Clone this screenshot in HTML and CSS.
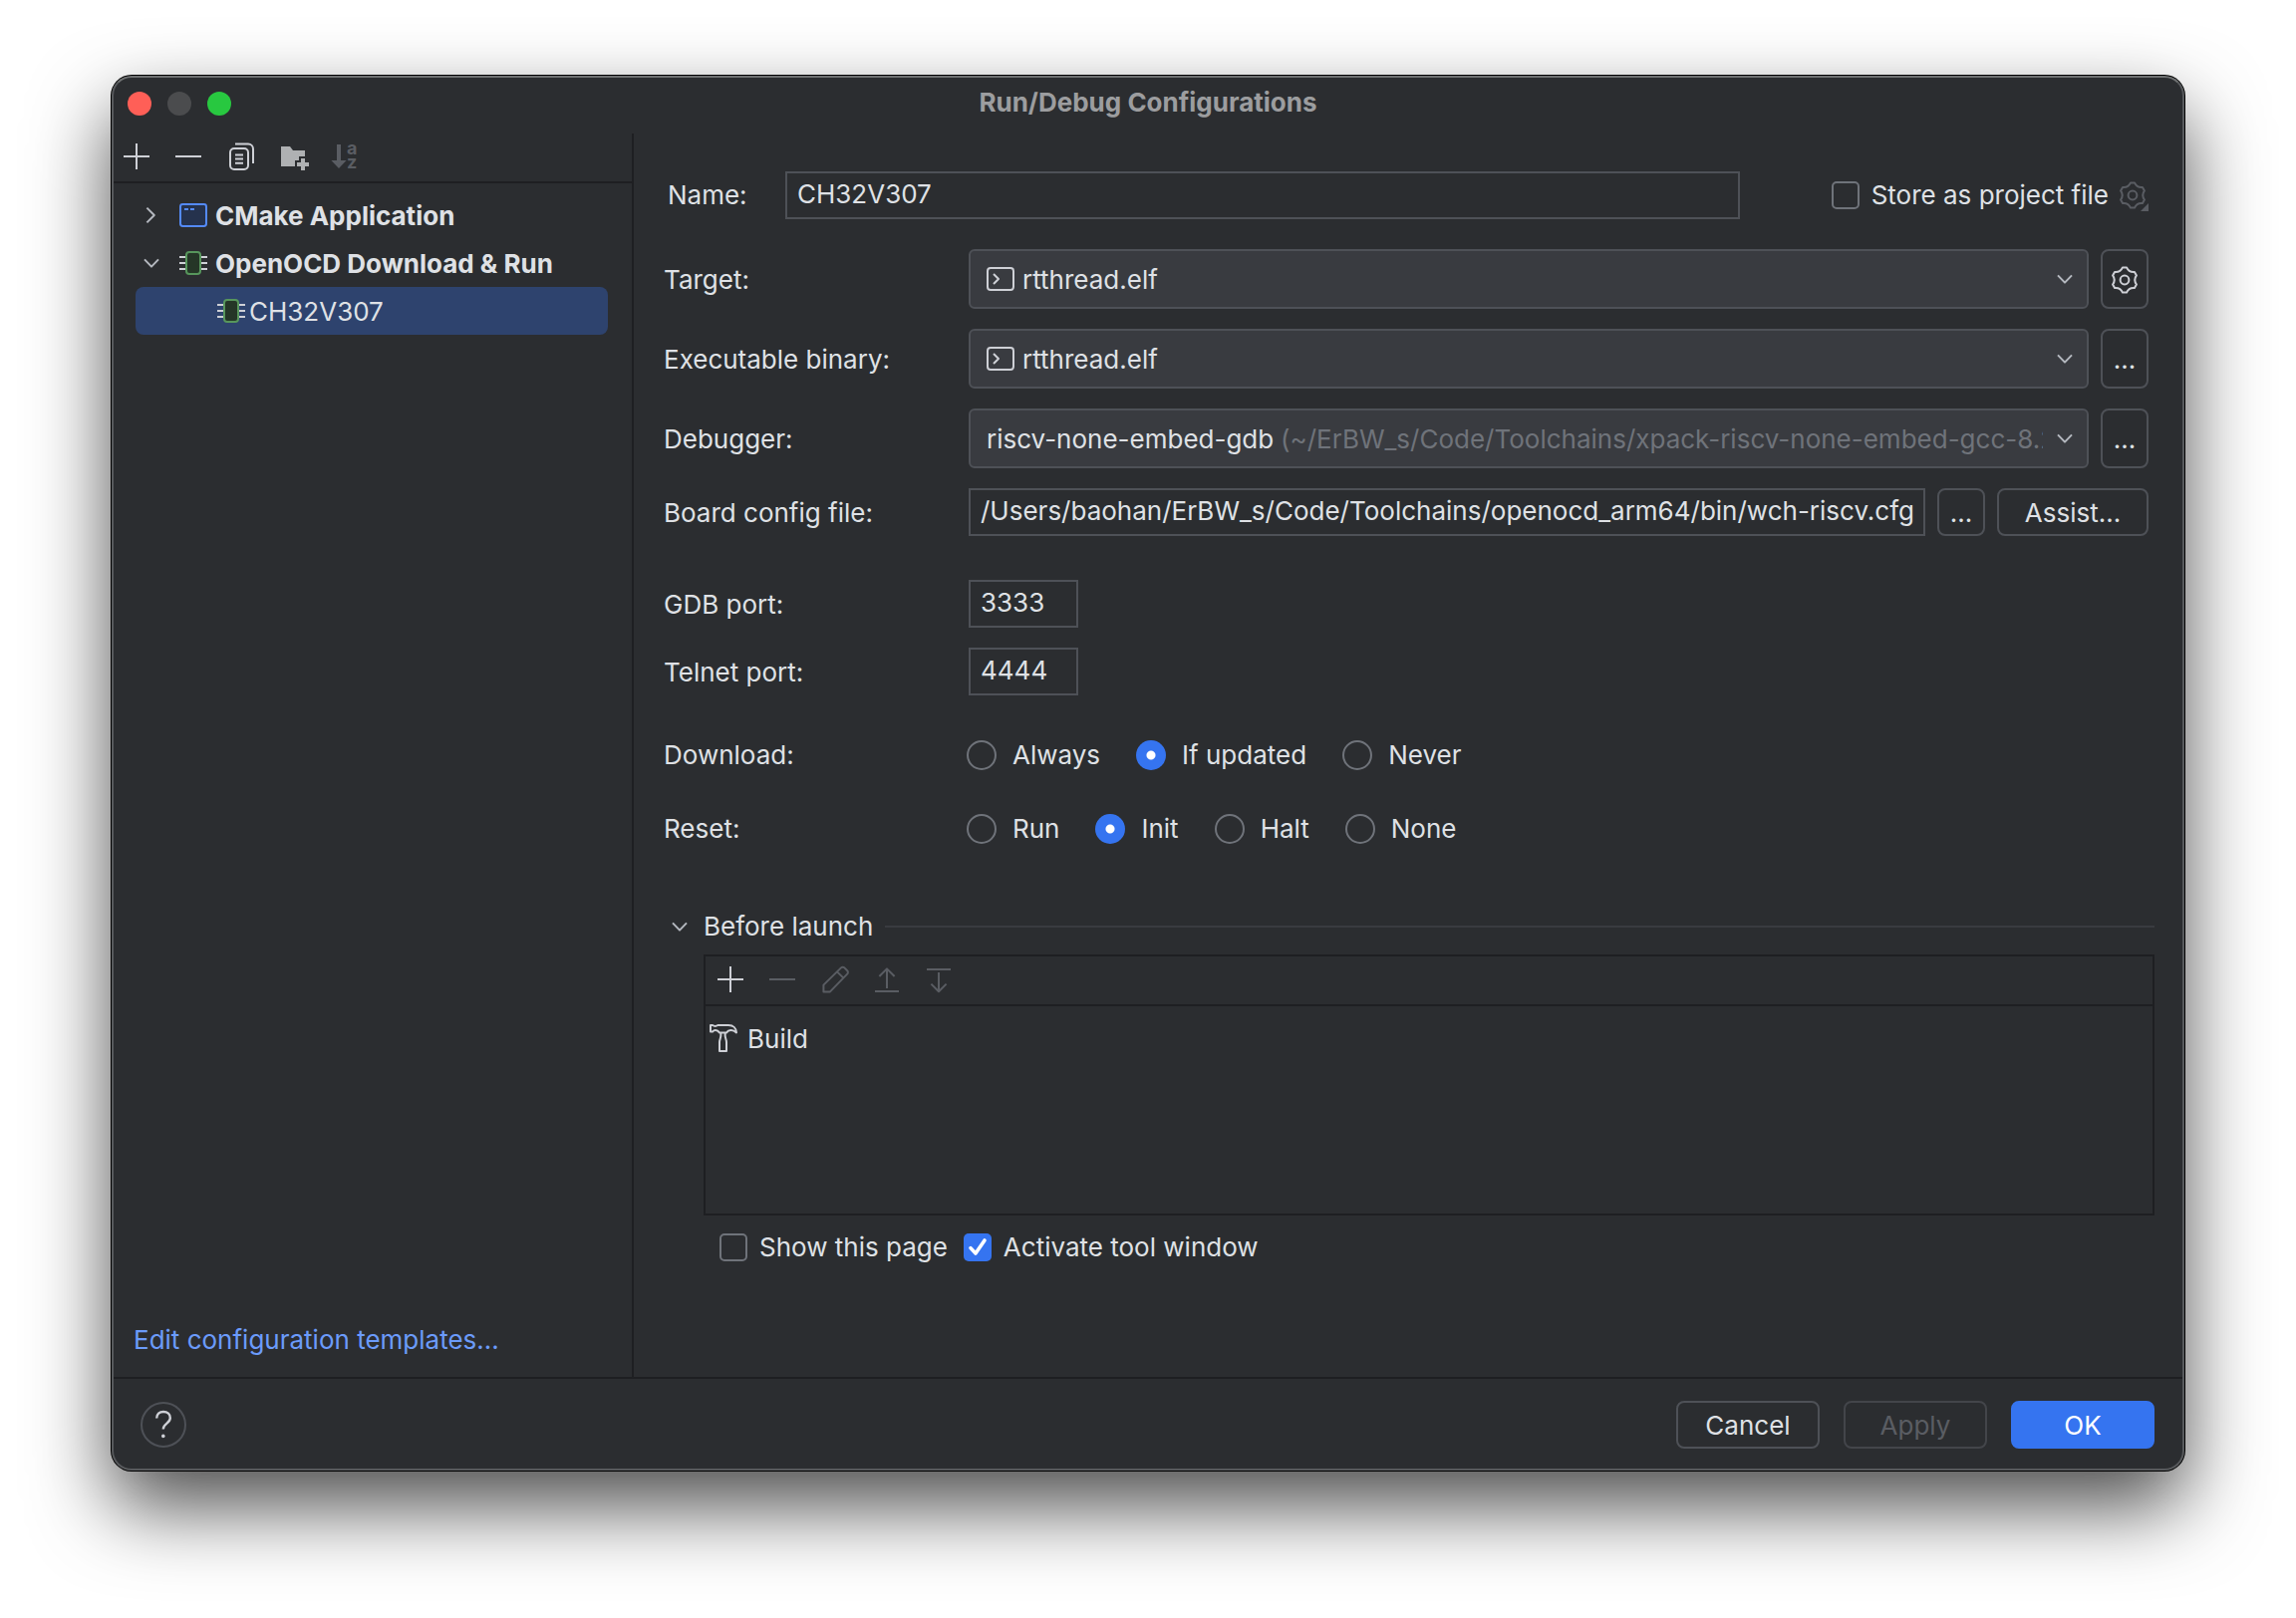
FILE: index.html
```html
<!DOCTYPE html>
<html lang="en">
<head>
<meta charset="utf-8">
<title>Run/Debug Configurations</title>
<meta name="viewport" content="width=device-width, initial-scale=1">
<link rel="stylesheet" href="styles.css">
</head>
<body>
<svg class="sprite" aria-hidden="true">
  <symbol id="i-plus" viewBox="0 0 16 16"><path d="M8 1.5v13M1.5 8h13"/></symbol>
  <symbol id="i-minus" viewBox="0 0 16 16"><path d="M1.5 8h13"/></symbol>
  <symbol id="i-down" viewBox="0 0 16 16"><path d="M4.5 6.2 8 9.8l3.5-3.6"/></symbol>
  <symbol id="i-right" viewBox="0 0 16 16"><path d="M5.700 4.300 9.400 8l-3.700 3.700"/></symbol>
  <symbol id="i-chip" viewBox="0 0 16 16"><path d="M1 5h3M1 8h3M1 11h3M12 5h3M12 8h3M12 11h3"/><rect class="chip" x="4.500" y="2.500" width="7" height="11" rx="1.500"/></symbol>
  <symbol id="i-console" viewBox="0 0 16 16"><rect x="1.500" y="2.500" width="13" height="11" rx="1.500"/><path d="M4.500 5.500 7 8l-2.500 2.500"/></symbol>
  <symbol id="i-gear" viewBox="0 0 16 16"><path d="M7 1.700H9Q10.150 4.280 12.970 3.970L13.970 5.710Q12.300 8 13.970 10.290L12.970 12.030Q10.150 11.720 9 14.300H7Q5.850 11.720 3.030 12.030L2.030 10.290Q3.700 8 2.030 5.710L3.030 3.970Q5.850 4.280 7 1.700Z"/><circle cx="8" cy="8" r="2.200"/></symbol>
</svg>

<div class="window" role="dialog" aria-labelledby="title">
  <header class="titlebar">
    <div class="lights">
      <button class="light close" aria-label="Close"></button>
      <button class="light minimize" aria-label="Minimize" disabled></button>
      <button class="light maximize" aria-label="Zoom"></button>
    </div>
    <h1 id="title">Run/Debug Configurations</h1>
  </header>

  <div class="body">
    <aside class="sidebar">
      <div class="toolbar sidebar-tools">
        <button class="tool" aria-label="Add"><svg class="icon"><use href="#i-plus"/></svg></button>
        <button class="tool" aria-label="Remove"><svg class="icon"><use href="#i-minus"/></svg></button>
        <button class="tool" aria-label="Copy"><svg class="icon" viewBox="0 0 16 16"><rect x="3" y="4" width="9" height="10.500" rx="2"/><path d="M5.500 1.700H12a2.500 2.500 0 0 1 2.500 2.500V11.500M5.500 7.200h4M5.500 9.300h4M5.500 11.400h4"/></svg></button>
        <button class="tool" aria-label="New folder"><svg class="icon solid" viewBox="0 0 16 16"><path d="M2.500 3H7L8.500 5H14.500V8H11.500V10H9.500V13H2.500Z"/><path d="M12.500 9h2v2h2v2h-2v2h-2v-2h-2v-2h2Z"/></svg></button>
        <button class="tool" aria-label="Sort alphabetically" disabled><svg class="icon solid" viewBox="0 0 16 16"><path d="M4.500 2h2v8h2.800L5.500 14 1.700 10h2.800Z"/><text class="glyph" x="9.500" y="7">a</text><text class="glyph" x="9.500" y="14">z</text></svg></button>
      </div>
      <ul class="tree">
        <li class="node"><svg class="icon muted"><use href="#i-right"/></svg><svg class="icon app" viewBox="0 0 16 16"><rect x="1.500" y="2.500" width="13" height="11" rx="1.200"/><path d="M3.500 5h2M6.500 5h2"/></svg><span>CMake Application</span></li>
        <li class="node"><svg class="icon muted"><use href="#i-down"/></svg><svg class="icon"><use href="#i-chip"/></svg><span>OpenOCD Download &amp; Run</span></li>
        <li class="node leaf selected"><svg class="icon"><use href="#i-chip"/></svg><span>CH32V307</span></li>
      </ul>
      <a class="templates" href="#">Edit configuration templates...</a>
    </aside>

    <main class="panel">
      <div class="form">
        <div class="name-row">
          <label for="name">Name:</label>
          <input class="text" id="name" type="text" value="CH32V307">
          <div class="store">
            <label class="choice"><input type="checkbox">Store as project file</label>
            <button class="tool" aria-label="Storage options" disabled><svg class="icon" viewBox="0 0 16 16"><use href="#i-gear"/><path class="corner" d="M16 12v4h-4Z"/></svg></button>
          </div>
        </div>

        <div class="row">
          <label for="target">Target:</label>
          <div class="fields">
            <div class="combo"><svg class="icon"><use href="#i-console"/></svg><select id="target"><option>rtthread.elf</option></select><svg class="icon muted"><use href="#i-down"/></svg></div>
            <button class="btn square" aria-label="Configure targets"><svg class="icon"><use href="#i-gear"/></svg></button>
          </div>
        </div>
        <div class="row">
          <label for="binary">Executable binary:</label>
          <div class="fields">
            <div class="combo"><svg class="icon"><use href="#i-console"/></svg><select id="binary"><option>rtthread.elf</option></select><svg class="icon muted"><use href="#i-down"/></svg></div>
            <button class="btn square">...</button>
          </div>
        </div>
        <div class="row">
          <label for="debugger">Debugger:</label>
          <div class="fields">
            <div class="combo described"><select id="debugger"><option>riscv-none-embed-gdb</option></select><span class="path">(~/ErBW_s/Code/Toolchains/xpack-riscv-none-embed-gcc-8.2</span><svg class="icon muted"><use href="#i-down"/></svg></div>
            <button class="btn square">...</button>
          </div>
        </div>
        <div class="row">
          <label for="board">Board config file:</label>
          <div class="fields">
            <input class="text" id="board" type="text" value="/Users/baohan/ErBW_s/Code/Toolchains/openocd_arm64/bin/wch-riscv.cfg">
            <button class="btn square">...</button>
            <button class="btn assist">Assist...</button>
          </div>
        </div>

        <div class="row group">
          <label for="gdb">GDB port:</label>
          <div class="fields"><input class="text port" id="gdb" type="text" value="3333"></div>
        </div>
        <div class="row">
          <label for="telnet">Telnet port:</label>
          <div class="fields"><input class="text port" id="telnet" type="text" value="4444"></div>
        </div>

        <div class="row group radio-row" role="radiogroup" aria-labelledby="download">
          <span id="download">Download:</span>
          <div class="radios">
            <label class="choice"><input type="radio" name="download">Always</label>
            <label class="choice"><input type="radio" name="download" checked>If updated</label>
            <label class="choice"><input type="radio" name="download">Never</label>
          </div>
        </div>
        <div class="row group radio-row" role="radiogroup" aria-labelledby="reset">
          <span id="reset">Reset:</span>
          <div class="radios">
            <label class="choice"><input type="radio" name="reset">Run</label>
            <label class="choice"><input type="radio" name="reset" checked>Init</label>
            <label class="choice"><input type="radio" name="reset">Halt</label>
            <label class="choice"><input type="radio" name="reset">None</label>
          </div>
        </div>
      </div>

      <section class="launch">
        <h2><svg class="icon muted"><use href="#i-down"/></svg>Before launch</h2>
        <div class="tasks">
          <div class="toolbar task-tools">
            <button class="tool" aria-label="Add task"><svg class="icon"><use href="#i-plus"/></svg></button>
            <button class="tool" aria-label="Remove task" disabled><svg class="icon"><use href="#i-minus"/></svg></button>
            <button class="tool" aria-label="Edit task" disabled><svg class="icon" viewBox="0 0 16 16"><path d="M2.700 14.200V10.800L11.500 2.200a1.200 1.200 0 0 1 1.700 0L14.600 3.600a1.200 1.200 0 0 1 0 1.700L6 14.200ZM9.500 4.200 12.700 7.300"/></svg></button>
            <button class="tool" aria-label="Move up" disabled><svg class="icon" viewBox="0 0 16 16"><path d="M8.500 12.500V2.700M4.700 6.500 8.500 2.700 12.300 6.500M2.500 14h12"/></svg></button>
            <button class="tool" aria-label="Move down" disabled><svg class="icon" viewBox="0 0 16 16"><path d="M8.500 4.500v9.600M4.700 10.300 8.500 14.100 12.300 10.300M2.500 3h12"/></svg></button>
          </div>
          <ul class="task-list">
            <li><svg class="icon" viewBox="0 0 16 16"><path d="M1.500 1.500H2.500Q3.800 2.400 5.200 1.500H10.500C13 1.500 14.400 3.200 14.500 5.200 13.200 4 12 3.600 10.500 4.300L9.500 5.200H6L5 4.300Q3.500 3.500 2.500 4.800H1.500ZM6.700 5.200C6.900 8 6 8.500 6 10V14.500H9.500V10C9.500 8.500 8.600 8 8.800 5.200"/></svg><span>Build</span></li>
          </ul>
        </div>
        <div class="options">
          <label class="choice"><input type="checkbox">Show this page</label>
          <label class="choice"><input type="checkbox" checked>Activate tool window</label>
        </div>
      </section>
    </main>
  </div>

  <footer class="footer">
    <button class="help" aria-label="Help"><svg class="icon" viewBox="0 0 16 16"><path class="mark" d="M4.600 4.800C4.600 2.700 6 1.500 8 1.500S11.400 2.800 11.400 4.600C11.400 7.300 7.900 7.300 7.900 10.200"/><circle class="dot" cx="7.900" cy="13.700" r=".9"/></svg></button>
    <div class="actions">
      <button class="btn">Cancel</button>
      <button class="btn" disabled>Apply</button>
      <button class="btn primary">OK</button>
    </div>
  </footer>
</div>
</body>
</html>
```
FILE: styles.css
```css
:root {
  --bg: #2b2d30;
  --field: #393b40;
  --line: #1e1f22;
  --border: #4e5157;
  --text: #dfe1e5;
  --icon: #ced0d6;
  --muted: #6f737a;
  --disabled: #5a5d63;
  --blue: #3574f0;
}

* {
  box-sizing: border-box;
}

body {
  display: flex;
  flex-direction: column;
  min-height: 100vh;
  margin: 0;
  padding: 76px 112px 148px;
  background: #fff;
  color: var(--text);
  font: 26px/32px Inter, "Liberation Sans", sans-serif;
}

button,
input,
select {
  margin: 0;
  color: inherit;
  font: inherit;
}

ul {
  margin: 0;
  padding: 0;
  list-style: none;
}

.sprite {
  position: absolute;
  width: 0;
  height: 0;
}

/* Window frame */

.window {
  display: flex;
  flex: 1;
  flex-direction: column;
  border: 2px solid #57595c;
  border-top-color: #6e7071;
  border-radius: 20px;
  background: var(--bg);
  box-shadow: 0 0 0 1px #000, 0 36px 80px rgba(0, 0, 0, 0.7);
}

.titlebar {
  display: grid;
  grid-template-columns: 1fr auto 1fr;
  align-items: center;
  height: 56px;
  padding: 0 14px 6px;
}

.titlebar h1 {
  margin: 0;
  color: #9c9d9f;
  font-size: 26px;
  font-weight: 700;
}

.lights {
  display: flex;
  gap: 16px;
  padding-top: 2px;
}

.light {
  width: 24px;
  height: 24px;
  padding: 0;
  border: 0;
  border-radius: 50%;
}

.close {
  background: #ff5f57;
}

.minimize {
  background: #4b4c4e;
}

.maximize {
  background: #28c840;
}

.body {
  display: grid;
  flex: 1;
  grid-template-columns: 522px minmax(0, 1fr);
}

/* Icons */

.icon {
  display: block;
  flex: none;
  width: 32px;
  height: 32px;
  overflow: visible;
  fill: none;
  stroke: var(--icon);
  stroke-linejoin: round;
}

.icon.muted {
  stroke: #b4b8bf;
}

.icon.solid {
  fill: #afb1b3;
  stroke: none;
}

.glyph {
  font-size: 9px;
  font-weight: 700;
}

.icon.app {
  fill: #25324d;
  stroke: #548af7;
}

.chip {
  fill: #253627;
  stroke: #57965c;
}

.mark {
  stroke-width: 1.2;
}

.dot {
  fill: var(--icon);
  stroke: none;
}

.corner {
  fill: var(--disabled);
  stroke: none;
}

.toolbar {
  display: flex;
  align-items: center;
  gap: 20px;
  height: 50px;
  padding-bottom: 2px;
  border-bottom: 2px solid var(--line);
}

.tool {
  padding: 0;
  border: 0;
  background: none;
}

.tool:disabled .icon {
  stroke: var(--disabled);
}

.tool:disabled .solid {
  fill: var(--disabled);
  stroke: none;
}

/* Sidebar */

.sidebar {
  display: flex;
  flex-direction: column;
  border-right: 2px solid var(--line);
}

.sidebar-tools {
  padding-left: 7px;
}

.tree {
  padding: 8px 24px 0 22px;
}

.node {
  display: flex;
  align-items: center;
  gap: 6px;
  height: 48px;
  font-weight: 700;
}

.node span,
.task-list span {
  padding-top: 2px;
}

.node .muted {
  margin-right: 4px;
}

.leaf {
  gap: 2px;
  padding-left: 80px;
  font-weight: 400;
}

.selected {
  border-radius: 8px;
  background: #2e436e;
}

.templates {
  margin-top: auto;
  padding: 0 20px 21px;
  color: #6b9bfa;
  text-decoration: none;
}

/* Form */

.panel {
  padding: 38px 28px 0 30px;
}

.form {
  margin-right: 6px;
}

.name-row {
  display: grid;
  grid-template-columns: 118px minmax(0, 1fr) auto;
  align-items: center;
  margin-bottom: 30px;
  padding-left: 4px;
}

.store {
  display: flex;
  align-items: center;
  gap: 8px;
  margin-left: 92px;
}

.row {
  display: grid;
  grid-template-columns: 306px minmax(0, 1fr);
  align-items: center;
}

.row > label {
  padding-top: 2px;
}

.row + .row {
  margin-top: 20px;
}

.row + .group {
  margin-top: 44px;
}

.radio-row {
  height: 30px;
}

.fields {
  display: flex;
  gap: 12px;
}

.text {
  flex: 1;
  width: 100%;
  min-width: 0;
  height: 48px;
  padding: 0 10px 4px;
  border: 2px solid var(--border);
  border-radius: 0;
  background: var(--bg);
  outline: 0;
}

.port {
  flex: none;
  width: 110px;
}

.combo {
  display: flex;
  flex: 1;
  align-items: center;
  gap: 6px;
  min-width: 0;
  height: 60px;
  padding: 0 6px 0 14px;
  border: 2px solid var(--border);
  border-radius: 6px;
  background: var(--field);
}

.combo select {
  flex: 1;
  height: 56px;
  padding: 2px 0 0;
  border: 0;
  background: none;
  appearance: none;
  outline: 0;
}

.described {
  padding-left: 16px;
}

.described select {
  flex: none;
}

.path {
  flex: 1;
  overflow: hidden;
  padding-top: 2px;
  color: var(--muted);
  white-space: nowrap;
}

.btn {
  display: flex;
  align-items: center;
  justify-content: center;
  min-width: 144px;
  height: 48px;
  padding: 2px 0 0;
  border: 2px solid var(--border);
  border-radius: 8px;
  background: none;
}

.btn:disabled {
  border-color: #43454a;
  color: var(--disabled);
}

.btn.primary {
  border-color: var(--blue);
  background: var(--blue);
  color: #fff;
}

.square {
  min-width: 48px;
  height: auto;
}

.assist {
  min-width: 152px;
}

.choice {
  display: flex;
  align-items: center;
  gap: 12px;
  white-space: nowrap;
}

.choice input {
  flex: none;
  width: 28px;
  height: 28px;
  border: 2px solid var(--muted);
  border-radius: 5px;
  appearance: none;
}

.choice input:checked {
  border: 0;
  background: var(--blue) url("data:image/svg+xml,%3Csvg xmlns='http://www.w3.org/2000/svg' viewBox='0 0 14 14'%3E%3Cpath d='M3.500 7.300 6 10 10.500 3.500' fill='none' stroke='white' stroke-width='1.800' stroke-linecap='round' stroke-linejoin='round'/%3E%3C/svg%3E");
}

.radios {
  display: flex;
  gap: 36px;
  height: 30px;
  margin-left: -2px;
}

.radios .choice {
  gap: 16px;
}

.radios input {
  width: 30px;
  height: 30px;
  border-radius: 50%;
}

.radios input:checked {
  background: radial-gradient(circle, #fff 4px, var(--blue) 5px);
}

/* Before launch */

.launch {
  margin-top: 68px;
}

.launch h2 {
  display: flex;
  align-items: center;
  gap: 8px;
  margin: 0 0 12px;
  font-size: 26px;
  font-weight: 400;
}

.launch h2::after {
  flex: 1;
  height: 2px;
  margin-left: 4px;
  background: #393b40;
  content: "";
}

.tasks {
  margin-left: 40px;
  border: 2px solid var(--line);
}

.task-tools {
  padding-left: 9px;
}

.task-list {
  min-height: 208px;
  padding: 8px 2px;
}

.task-list li {
  display: flex;
  align-items: center;
  gap: 8px;
  height: 48px;
}

.options {
  display: flex;
  gap: 16px;
  height: 28px;
  margin: 18px 0 40px 56px;
}

/* Footer */

.footer {
  display: flex;
  align-items: center;
  justify-content: space-between;
  padding: 22px 28px 20px 27px;
  border-top: 2px solid var(--line);
}

.help {
  display: grid;
  place-items: center;
  width: 46px;
  height: 46px;
  padding: 0;
  border: 2px solid var(--border);
  border-radius: 50%;
  background: none;
}

.actions {
  display: flex;
  gap: 24px;
}
```
